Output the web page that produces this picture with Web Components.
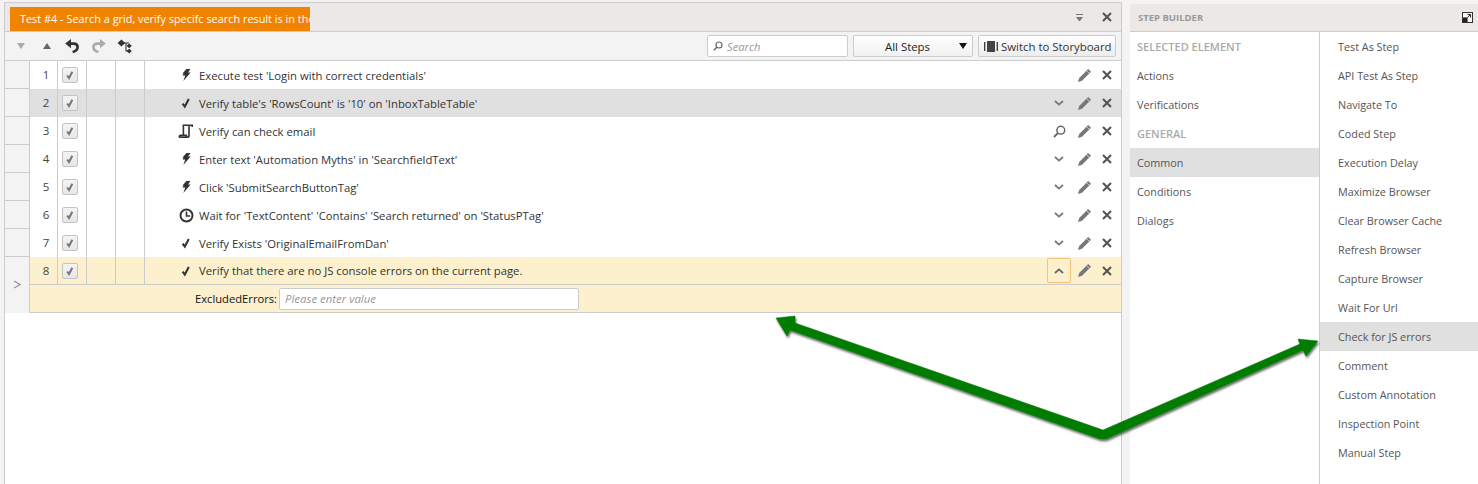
<!DOCTYPE html>
<html>
<head>
<meta charset="utf-8">
<title>Test steps</title>
<style>
  html, body { margin: 0; height: 100%; overflow: hidden; background: #f3f3f3; }
  body { font: 12px "Open Sans", "Liberation Sans", sans-serif; color: #333; }
</style>
</head>
<body>
<app-shell>
  <test-panel slot="main" title-text="Test #4 - Search a grid, verify specifc search result is in the">
    <step-row num="1" icon="bolt" noexpand>Execute test 'Login with correct credentials'</step-row>
    <step-row num="2" icon="check" state="selected">Verify table's 'RowsCount' is '10' on 'InboxTableTable'</step-row>
    <step-row num="3" icon="scroll" action="search">Verify can check email</step-row>
    <step-row num="4" icon="bolt">Enter text 'Automation Myths' in 'SearchfieldText'</step-row>
    <step-row num="5" icon="bolt">Click 'SubmitSearchButtonTag'</step-row>
    <step-row num="6" icon="clock">Wait for 'TextContent' 'Contains' 'Search returned' on 'StatusPTag'</step-row>
    <step-row num="7" icon="check">Verify Exists 'OriginalEmailFromDan'</step-row>
    <step-row num="8" icon="check" state="open">Verify that there are no JS console errors on the current page.</step-row>
    <param-row label="ExcludedErrors:" placeholder="Please enter value"></param-row>
  </test-panel>
  <step-builder slot="side">
    <builder-item slot="left" kind="heading">SELECTED ELEMENT</builder-item>
    <builder-item slot="left">Actions</builder-item>
    <builder-item slot="left">Verifications</builder-item>
    <builder-item slot="left" kind="heading">GENERAL</builder-item>
    <builder-item slot="left" active>Common</builder-item>
    <builder-item slot="left">Conditions</builder-item>
    <builder-item slot="left">Dialogs</builder-item>
    <builder-item slot="right">Test As Step</builder-item>
    <builder-item slot="right">API Test As Step</builder-item>
    <builder-item slot="right">Navigate To</builder-item>
    <builder-item slot="right">Coded Step</builder-item>
    <builder-item slot="right">Execution Delay</builder-item>
    <builder-item slot="right">Maximize Browser</builder-item>
    <builder-item slot="right">Clear Browser Cache</builder-item>
    <builder-item slot="right">Refresh Browser</builder-item>
    <builder-item slot="right">Capture Browser</builder-item>
    <builder-item slot="right">Wait For Url</builder-item>
    <builder-item slot="right" active>Check for JS errors</builder-item>
    <builder-item slot="right">Comment</builder-item>
    <builder-item slot="right">Custom Annotation</builder-item>
    <builder-item slot="right">Inspection Point</builder-item>
    <builder-item slot="right">Manual Step</builder-item>
  </step-builder>
  <green-arrows slot="over"></green-arrows>
</app-shell>

<script>
const ICONS = {
  bolt: `<svg width="12" height="14" viewBox="0 0 12 14"><path d="M6.5 1 10.5 1 8 4.6 10.6 4.6 3.4 13 5.2 7.6 2.4 7.6 3.6 5.4 2.6 5.2z" fill="#333"/></svg>`,
  check: `<svg width="12" height="12" viewBox="0 0 12 12"><path d="M2.6 6.6 4.8 9.6 8.8 2" fill="none" stroke="#333" stroke-width="2.1"/></svg>`,
  scroll: `<svg width="16" height="16" viewBox="0 0 16 16"><path d="M4.6 2.2H14.2V4M12 2.2C11 2.2 11 3 11 4V12.4C11 13.6 10 14.2 9 14.2H2C1 14.2 1 12.4 2.4 12.4H8.4V13.6M4.6 2.2C5.6 2.6 5.4 3.4 5.4 4.2V11.6" fill="none" stroke="#333" stroke-width="1.6"/></svg>`,
  clock: `<svg width="15" height="15" viewBox="0 0 15 15"><circle cx="7.5" cy="7.5" r="6" fill="none" stroke="#333" stroke-width="1.9"/><path d="M7.5 3.6V8H11.2" fill="none" stroke="#333" stroke-width="1.6"/></svg>`,
  pencil: `<svg width="15" height="15" viewBox="0 0 15 15"><path d="M11.2 1 14 3.8 5 12.8 1 14 2.2 10z" fill="#777"/><path d="M9.8 2.8 12.2 5.2" stroke="#e4e4e4" stroke-width=".8"/></svg>`,
  close: `<svg width="10" height="10" viewBox="0 0 10 10"><path d="M1 1 9 9M9 1 1 9" stroke="#555" stroke-width="2.1"/></svg>`,
  down: `<svg width="10" height="6" viewBox="0 0 10 6"><path d="M1 1 5 4.6 9 1" fill="none" stroke="#777" stroke-width="1.8"/></svg>`,
  up: `<svg width="10" height="6" viewBox="0 0 10 6"><path d="M1 5 5 1.4 9 5" fill="none" stroke="#666" stroke-width="1.8"/></svg>`,
  search: `<svg width="13" height="13" viewBox="0 0 13 13"><circle cx="7.8" cy="5.2" r="3.9" fill="none" stroke="#666" stroke-width="1.5"/><path d="M5 8 1 12" stroke="#666" stroke-width="1.8"/></svg>`,
  undo: `<svg width="14" height="14" viewBox="0 0 14 14"><path d="M3 4.6H8.6C11.4 4.6 12.6 6.2 12.6 8 12.6 10.4 10.8 12.2 7.6 13" fill="none" stroke="#333" stroke-width="2.6"/><path d="M6 0V9.2L.2 4.6z" fill="#333"/></svg>`,
  redo: `<svg width="14" height="14" viewBox="0 0 14 14"><path d="M11 4.6H5.4C2.6 4.6 1.4 6.2 1.4 8 1.4 10.4 3.2 12.2 6.4 13" fill="none" stroke="#aaa" stroke-width="2.6"/><path d="M8 0V9.2L13.8 4.6z" fill="#aaa"/></svg>`,
  tree: `<svg width="15" height="15" viewBox="0 0 15 15"><path d="M4.4 .6 8.2 4 4.4 7.4 .6 4zM12.2 4.4 14.8 6.8 12.2 9.2 9.6 6.8zM12.2 9.8 14.8 12 12.2 14.4 9.6 12z" fill="#333"/><path d="M7 4H12M9 4V12H11" fill="none" stroke="#333" stroke-width="1.1"/></svg>`,
  board: `<svg width="14" height="11" viewBox="0 0 14 11"><path d="M0 1H1.4V10H0zM3 0H11V11H3zM12.6 1H14V10H12.6z" fill="#444"/></svg>`,
  expand: `<svg width="11" height="11" viewBox="0 0 11 11"><rect x=".5" y=".5" width="10" height="10" fill="#fff" stroke="#333"/><rect x="1" y="5.4" width="4.6" height="4.6" fill="#222"/><path d="M5.4 2.4H8.6V5.6M8.4 2.6 5.4 5.6" fill="none" stroke="#222"/></svg>`
};

class AppShell extends HTMLElement {
  constructor() {
    super();
    this.attachShadow({ mode: "open" }).innerHTML = `
      <style>
        :host { display: flex; position: relative; height: 484px; width: 1478px; overflow: hidden; box-sizing: border-box; padding: 2px 0 0 4px; gap: 8px; }
      </style>
      <slot name="main"></slot>
      <slot name="side"></slot>
      <slot name="over"></slot>`;
  }
}

class TestPanel extends HTMLElement {
  constructor() {
    super();
    const title = this.getAttribute("title-text");
    this.attachShadow({ mode: "open" }).innerHTML = `
      <style>
        :host { display: flex; flex-direction: column; width: 1118px; flex: none; background: #fff; border: solid #ccc; border-width: 1px 1px 0 1px; box-sizing: border-box; }
        .head { height: 29px; box-sizing: border-box; background: #ebe8e5; border-bottom: 1px solid #ccc; display: flex; align-items: flex-end; padding-left: 5px; }
        .tab { width: 300px; height: 24px; background: #f08300; color: #fff; font-size: 10.9px; line-height: 24px; padding-left: 10px; box-sizing: border-box; white-space: nowrap; overflow: hidden; }
        .head-tools { margin-left: auto; height: 28px; display: flex; align-items: center; gap: 19px; padding-right: 9px; }
        .menu { width: 7px; height: 6px; display: block; border-top: 1px solid #777; position: relative; }
        .menu::after { content: ""; display: block; margin-top: 2px; border: 3.5px solid transparent; border-top: 4px solid #777; border-bottom: 0; }
        .bar { height: 29px; box-sizing: border-box; background: #f3f3f3; border-bottom: 1px solid #ccc; display: flex; align-items: center; padding: 0 5px 0 12px; }
        .bar .tri { width: 0; height: 0; border: 4px solid transparent; }
        .tri.dn { border-top: 6px solid #aaa; border-bottom: 0; margin-right: 18px; }
        .tri.upw { border-bottom: 6px solid #666; border-top: 0; margin-right: 14px; }
        .bar svg { display: block; }
        .gap13 { margin-right: 13px; display: block; }
        .gap11 { margin-right: 11px; display: block; }
        .find { margin-left: auto; width: 141px; height: 22px; box-sizing: border-box; background: #fff; border: 1px solid #ccc; border-radius: 2px; display: flex; align-items: center; gap: 4px; padding-left: 5px; color: #999; font-style: italic; font-size: 11.2px; }
        .find svg { width: 10px; height: 10px; }
        .pick { width: 120px; height: 22px; box-sizing: border-box; margin-left: 5px; border: 1px solid #ccc; border-radius: 2px; background: linear-gradient(#fff, #f1f1f1); display: flex; align-items: center; color: #222; font-size: 11.4px; padding-left: 31px; }
        .pick::after { content: ""; margin-left: auto; margin-right: 5px; border: 4px solid transparent; border-top: 6px solid #111; border-bottom: 0; }
        .btn { width: 138px; height: 22px; box-sizing: border-box; margin-left: 5px; border: 1px solid #ccc; border-radius: 2px; background: linear-gradient(#fff, #ececec); display: flex; align-items: center; gap: 3px; padding-left: 5px; color: #333; font-size: 11.4px; white-space: nowrap; }
        .grid { flex: 1; }
      </style>
      <div class="head">
        <div class="tab">${title}</div>
        <div class="head-tools"><span class="menu"></span>${ICONS.close}</div>
      </div>
      <div class="bar">
        <span class="tri dn"></span><span class="tri upw"></span>
        <span class="gap13">${ICONS.undo}</span><span class="gap11">${ICONS.redo}</span>${ICONS.tree}
        <div class="find">${ICONS.search}<span>Search</span></div>
        <div class="pick">All Steps</div>
        <div class="btn">${ICONS.board}<span>Switch to Storyboard</span></div>
      </div>
      <div class="grid"><slot></slot></div>`;
  }
}

class StepRow extends HTMLElement {
  constructor() {
    super();
    const state = this.getAttribute("state") || "";
    const action = this.getAttribute("action");
    const open = state === "open";
    const tone = state === "selected" ? "sel" : open ? "open" : "";
    let first = "";
    if (action === "search") first = `<span class="act">${ICONS.search}</span>`;
    else if (open) first = `<span class="act on">${ICONS.up}</span>`;
    else if (!this.hasAttribute("noexpand")) first = `<span class="act">${ICONS.down}</span>`;
    this.attachShadow({ mode: "open" }).innerHTML = `
      <style>
        :host { display: grid; grid-template-columns: 25px 28px 29px 29px 29px 1fr; height: 28px; box-sizing: border-box; }
        .gut { background: #f3f3f3; border-right: 1px solid #ccc; border-bottom: 1px solid #ccc; position: relative; }
        .c { border-right: 1px solid #ccc; display: flex; align-items: center; justify-content: center; font-size: 11.5px; color: #444; box-sizing: border-box; }
        .num { padding-left: 5px; padding-bottom: 1px; }
        .box { width: 16px; height: 16px; box-sizing: border-box; border: 1px solid #c4c4c4; border-radius: 2px; background: linear-gradient(#f4f4f4, #e6e6e6); display: flex; align-items: center; justify-content: center; margin-left: -4px; }
        .box svg { width: 10px; height: 10px; }
        .box path { stroke: #777; stroke-width: 2.4; }
        .main { display: flex; align-items: center; min-width: 0; }
        .ico { width: 16px; margin-left: 33px; display: flex; justify-content: center; align-items: center; }
        .text { margin-left: 5px; font-size: 11.3px; white-space: nowrap; color: #333; flex: 1; }
        .acts { display: flex; align-items: center; margin-right: 9px; }
        .act { width: 24px; height: 25px; box-sizing: border-box; display: flex; align-items: center; justify-content: center; margin-right: 6px; border: 1px solid transparent; border-radius: 2px; }
        .act.on { border-color: #f5c27a; }
        .act.pen { width: 15px; margin-right: 10px; border: 0; }
        .act.x { width: 10px; margin: 0; border: 0; }
        .sel { background: #e0e0e0; }
        .open { background: #fdf0cd; }
        .open.main, .open.c { border-bottom: 1px solid #ccc; }
        .open-gut { border-bottom: 0; }
        .chev { position: absolute; left: 8px; top: 23px; width: 8px; height: 9px; z-index: 2; }
      </style>
      <div class="gut ${open ? "open-gut" : ""}">${open ? `<svg class="chev" viewBox="0 0 8 9"><path d="M1 1 7 4.5 1 8" fill="none" stroke="#999" stroke-width="1.4"/></svg>` : ""}</div>
      <div class="c num ${tone}">${this.getAttribute("num")}</div>
      <div class="c ${tone}"><span class="box">${ICONS.check}</span></div>
      <div class="c ${tone}"></div>
      <div class="c ${tone}"></div>
      <div class="main ${tone}">
        <span class="ico">${ICONS[this.getAttribute("icon")]}</span>
        <span class="text"><slot></slot></span>
        <span class="acts">${first}<span class="act pen">${ICONS.pencil}</span><span class="act x">${ICONS.close}</span></span>
      </div>`;
  }
}

class ParamRow extends HTMLElement {
  constructor() {
    super();
    this.attachShadow({ mode: "open" }).innerHTML = `
      <style>
        :host { display: grid; grid-template-columns: 25px 1fr; height: 28px; box-sizing: border-box; }
        .gut { background: #f3f3f3; border-right: 1px solid #ccc; }
        .body { background: #fdf0cd; border-bottom: 1px solid #ccc; display: flex; align-items: center; padding-left: 165px; gap: 2px; }
        label { color: #111; font-size: 11.2px; white-space: nowrap; }
        .input { width: 300px; height: 22px; box-sizing: border-box; background: #fff; border: 1px solid #ccc; border-radius: 2px; padding-left: 5px; color: #999; font-style: italic; font-size: 11.4px; line-height: 19px; }
      </style>
      <div class="gut"></div>
      <div class="body"><label>${this.getAttribute("label")}</label><div class="input">${this.getAttribute("placeholder")}</div></div>`;
  }
}

class StepBuilder extends HTMLElement {
  constructor() {
    super();
    this.attachShadow({ mode: "open" }).innerHTML = `
      <style>
        :host { display: flex; flex-direction: column; flex: 1; margin-top: 2px; background: #fff; min-width: 0; }
        .head { height: 28px; box-sizing: border-box; background: #ebe8e5; border-bottom: 1px solid #ccc; display: flex; align-items: center; justify-content: space-between; padding: 0 5px 1px 8px; color: #999; font-size: 9.5px; font-weight: 700; }
        .head svg { display: block; }
        .cols { flex: 1; display: grid; grid-template-columns: 190px 1fr; }
        .left { border-right: 1px solid #ccc; }
      </style>
      <div class="head"><span>STEP BUILDER</span>${ICONS.expand}</div>
      <div class="cols">
        <div class="left"><slot name="left"></slot></div>
        <div class="right"><slot name="right"></slot></div>
      </div>`;
  }
}

class BuilderItem extends HTMLElement {
  constructor() {
    super();
    this.attachShadow({ mode: "open" }).innerHTML = `
      <style>
        :host { display: flex; align-items: center; height: 29px; box-sizing: border-box; padding: 0 0 1px 7px; font-size: 10.8px; color: #555; white-space: nowrap; }
        :host([slot="right"]) { padding-left: 18px; }
        :host([active]) { background: #e0e0e0; }
        :host([kind="heading"]) { color: #aaa; font-weight: 600; font-size: 11px; }
      </style>
      <slot></slot>`;
  }
}

class GreenArrows extends HTMLElement {
  constructor() {
    super();
    this.attachShadow({ mode: "open" }).innerHTML = `
      <style>
        :host { position: absolute; inset: 0; pointer-events: none; display: block; }
        svg { display: block; }
      </style>
      <svg width="1478" height="484" viewBox="0 0 1478 484">
        <defs><filter id="s" x="-5%" y="-5%" width="110%" height="120%"><feDropShadow dx="1" dy="2" stdDeviation="1" flood-color="#000" flood-opacity=".6"/></filter></defs>
        <g filter="url(#s)" fill="#007d00">
          <path d="M1103 430 795 323 795 316 776 318 787 336 790 330 1100 439 1106 439 1303 350 1306 356 1318 341 1298 339 1300 344 1103 430z" stroke="#007d00" stroke-width=".5" stroke-linejoin="round"/>
        </g>
      </svg>`;
  }
}

customElements.define("app-shell", AppShell);
customElements.define("test-panel", TestPanel);
customElements.define("step-row", StepRow);
customElements.define("param-row", ParamRow);
customElements.define("step-builder", StepBuilder);
customElements.define("builder-item", BuilderItem);
customElements.define("green-arrows", GreenArrows);
</script>
</body>
</html>
